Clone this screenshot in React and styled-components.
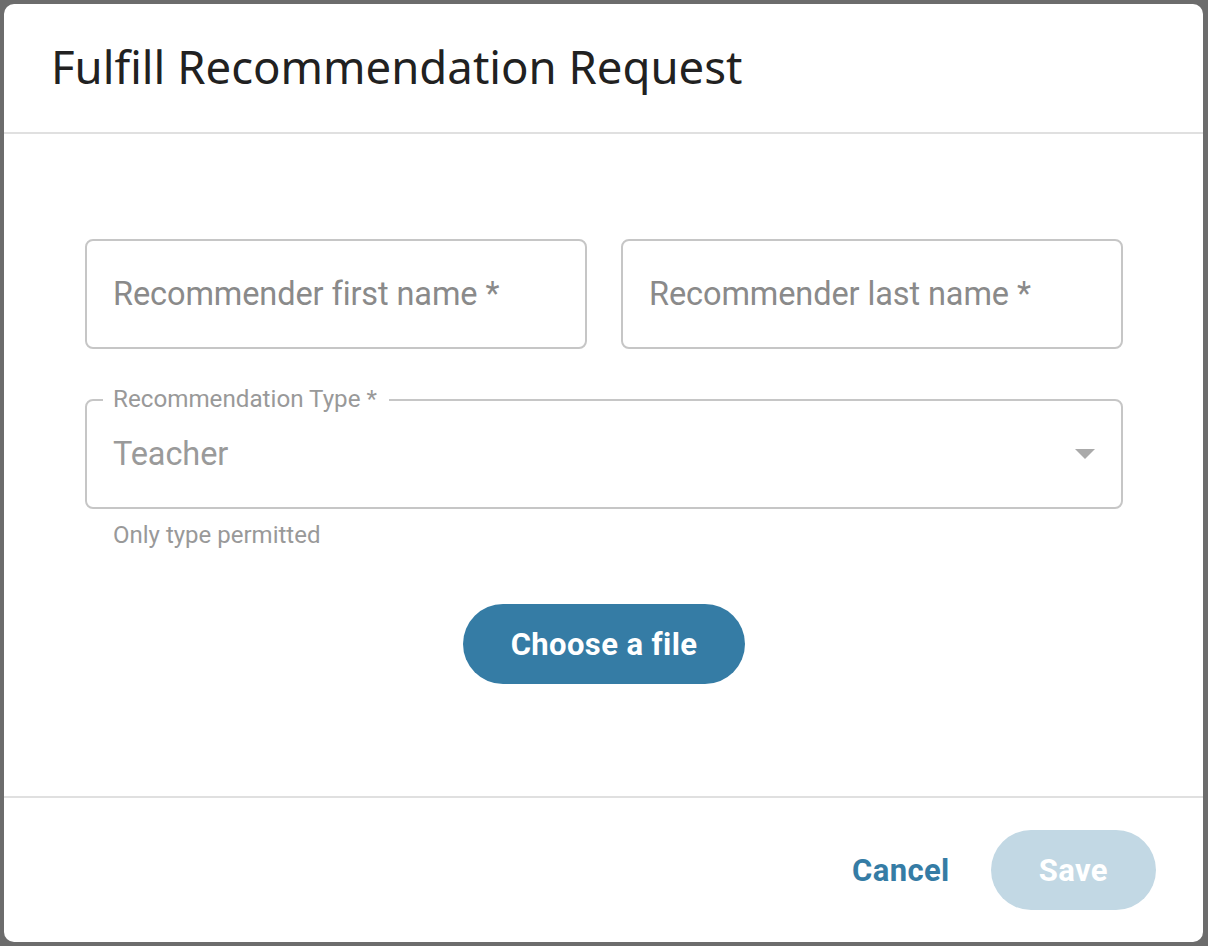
import React from "react";
import styled, { createGlobalStyle } from "styled-components";

const Global = createGlobalStyle`
  html, body { margin: 0; padding: 0; }
  body {
    background: #6c6c6c;
    font-family: Roboto, "Noto Sans", Arial, sans-serif;
    -webkit-font-smoothing: antialiased;
  }
  * { box-sizing: border-box; }
`;

const Backdrop = styled.div`
  width: 1208px;
  height: 946px;
  padding: 4px 5px 4px 4px;
  display: flex;
`;

const Dialog = styled.div`
  flex: 1;
  background: #fff;
  border-radius: 10px;
  display: flex;
  flex-direction: column;
  overflow: hidden;
`;

const Header = styled.header`
  height: 130px;
  flex: none;
  display: flex;
  align-items: center;
  padding: 0 0 4px 47px;
  border-bottom: 2px solid #e0e0e0;
`;

const Title = styled.h1`
  margin: 0;
  font-family: "Noto Sans", Roboto, sans-serif;
  font-weight: 400;
  font-size: 45.5px;
  color: #212121;
  letter-spacing: 0;
`;

const Content = styled.main`
  flex: 1;
  display: flex;
  flex-direction: column;
  padding: 105px 80px 0 81px;
`;

const Row = styled.div`
  display: grid;
  grid-template-columns: 1fr 1fr;
  gap: 34px;
`;

const Field = styled.div`
  position: relative;
  height: 110px;
  border: 2px solid #c6c6c6;
  border-radius: 8px;
  display: flex;
  align-items: center;
  padding: 0 26px;
`;

const Placeholder = styled.span`
  font-size: 32.5px;
  letter-spacing: -0.1px;
  color: ${(p) => p.$color || "#8a8a8a"};
`;

const SelectBlock = styled.div`
  margin-top: 50px;
  display: flex;
  flex-direction: column;
`;

const Notch = styled.span`
  position: absolute;
  top: -16px;
  left: 16px;
  padding: 0 12px 0 10px;
  background: #fff;
  font-size: 24.2px;
  line-height: 28px;
  color: #999;
`;

const Arrow = styled.svg`
  position: absolute;
  right: 26px;
  top: 50%;
  margin-top: -5px;
`;

const Helper = styled.div`
  margin: 11px 0 0 28px;
  font-size: 24px;
  line-height: 30px;
  color: #999;
`;

const Center = styled.div`
  margin-top: 54px;
  display: flex;
  justify-content: center;
`;

const Pill = styled.button`
  height: 80px;
  border: none;
  border-radius: 40px;
  padding: 0 ${(p) => p.$pad || 48}px;
  background: ${(p) => p.$bg || "#357ca5"};
  color: #fff;
  font-family: Roboto, sans-serif;
  font-weight: 700;
  font-size: 31px;
  letter-spacing: 0.4px;
  cursor: pointer;
`;

const Footer = styled.footer`
  flex: none;
  height: 146px;
  border-top: 2px solid #e0e0e0;
  display: flex;
  align-items: center;
  justify-content: flex-end;
  padding: 0 47px 0 0;
  gap: 41px;
`;

const TextButton = styled.button`
  border: none;
  background: none;
  padding: 0;
  color: #357ca5;
  font-family: Roboto, sans-serif;
  font-weight: 700;
  font-size: 31px;
  letter-spacing: 0.4px;
`;

export default function App() {
  return (
    <>
      <Global />
      <Backdrop>
        <Dialog>
          <Header>
            <Title>Fulfill Recommendation Request</Title>
          </Header>
          <Content>
            <Row>
              <Field>
                <Placeholder>Recommender first name *</Placeholder>
              </Field>
              <Field>
                <Placeholder>Recommender last name *</Placeholder>
              </Field>
            </Row>
            <SelectBlock>
              <Field>
                <Notch>Recommendation Type *</Notch>
                <Placeholder $color="#9a9a9a">Teacher</Placeholder>
                <Arrow width="20" height="10" viewBox="0 0 20 10">
                  <path d="M0 0 L20 0 L10 10 Z" fill="#aaa" />
                </Arrow>
              </Field>
              <Helper>Only type permitted</Helper>
            </SelectBlock>
            <Center>
              <Pill>Choose a file</Pill>
            </Center>
          </Content>
          <Footer>
            <TextButton>Cancel</TextButton>
            <Pill $bg="#c2d8e4" $pad={48}>Save</Pill>
          </Footer>
        </Dialog>
      </Backdrop>
    </>
  );
}
